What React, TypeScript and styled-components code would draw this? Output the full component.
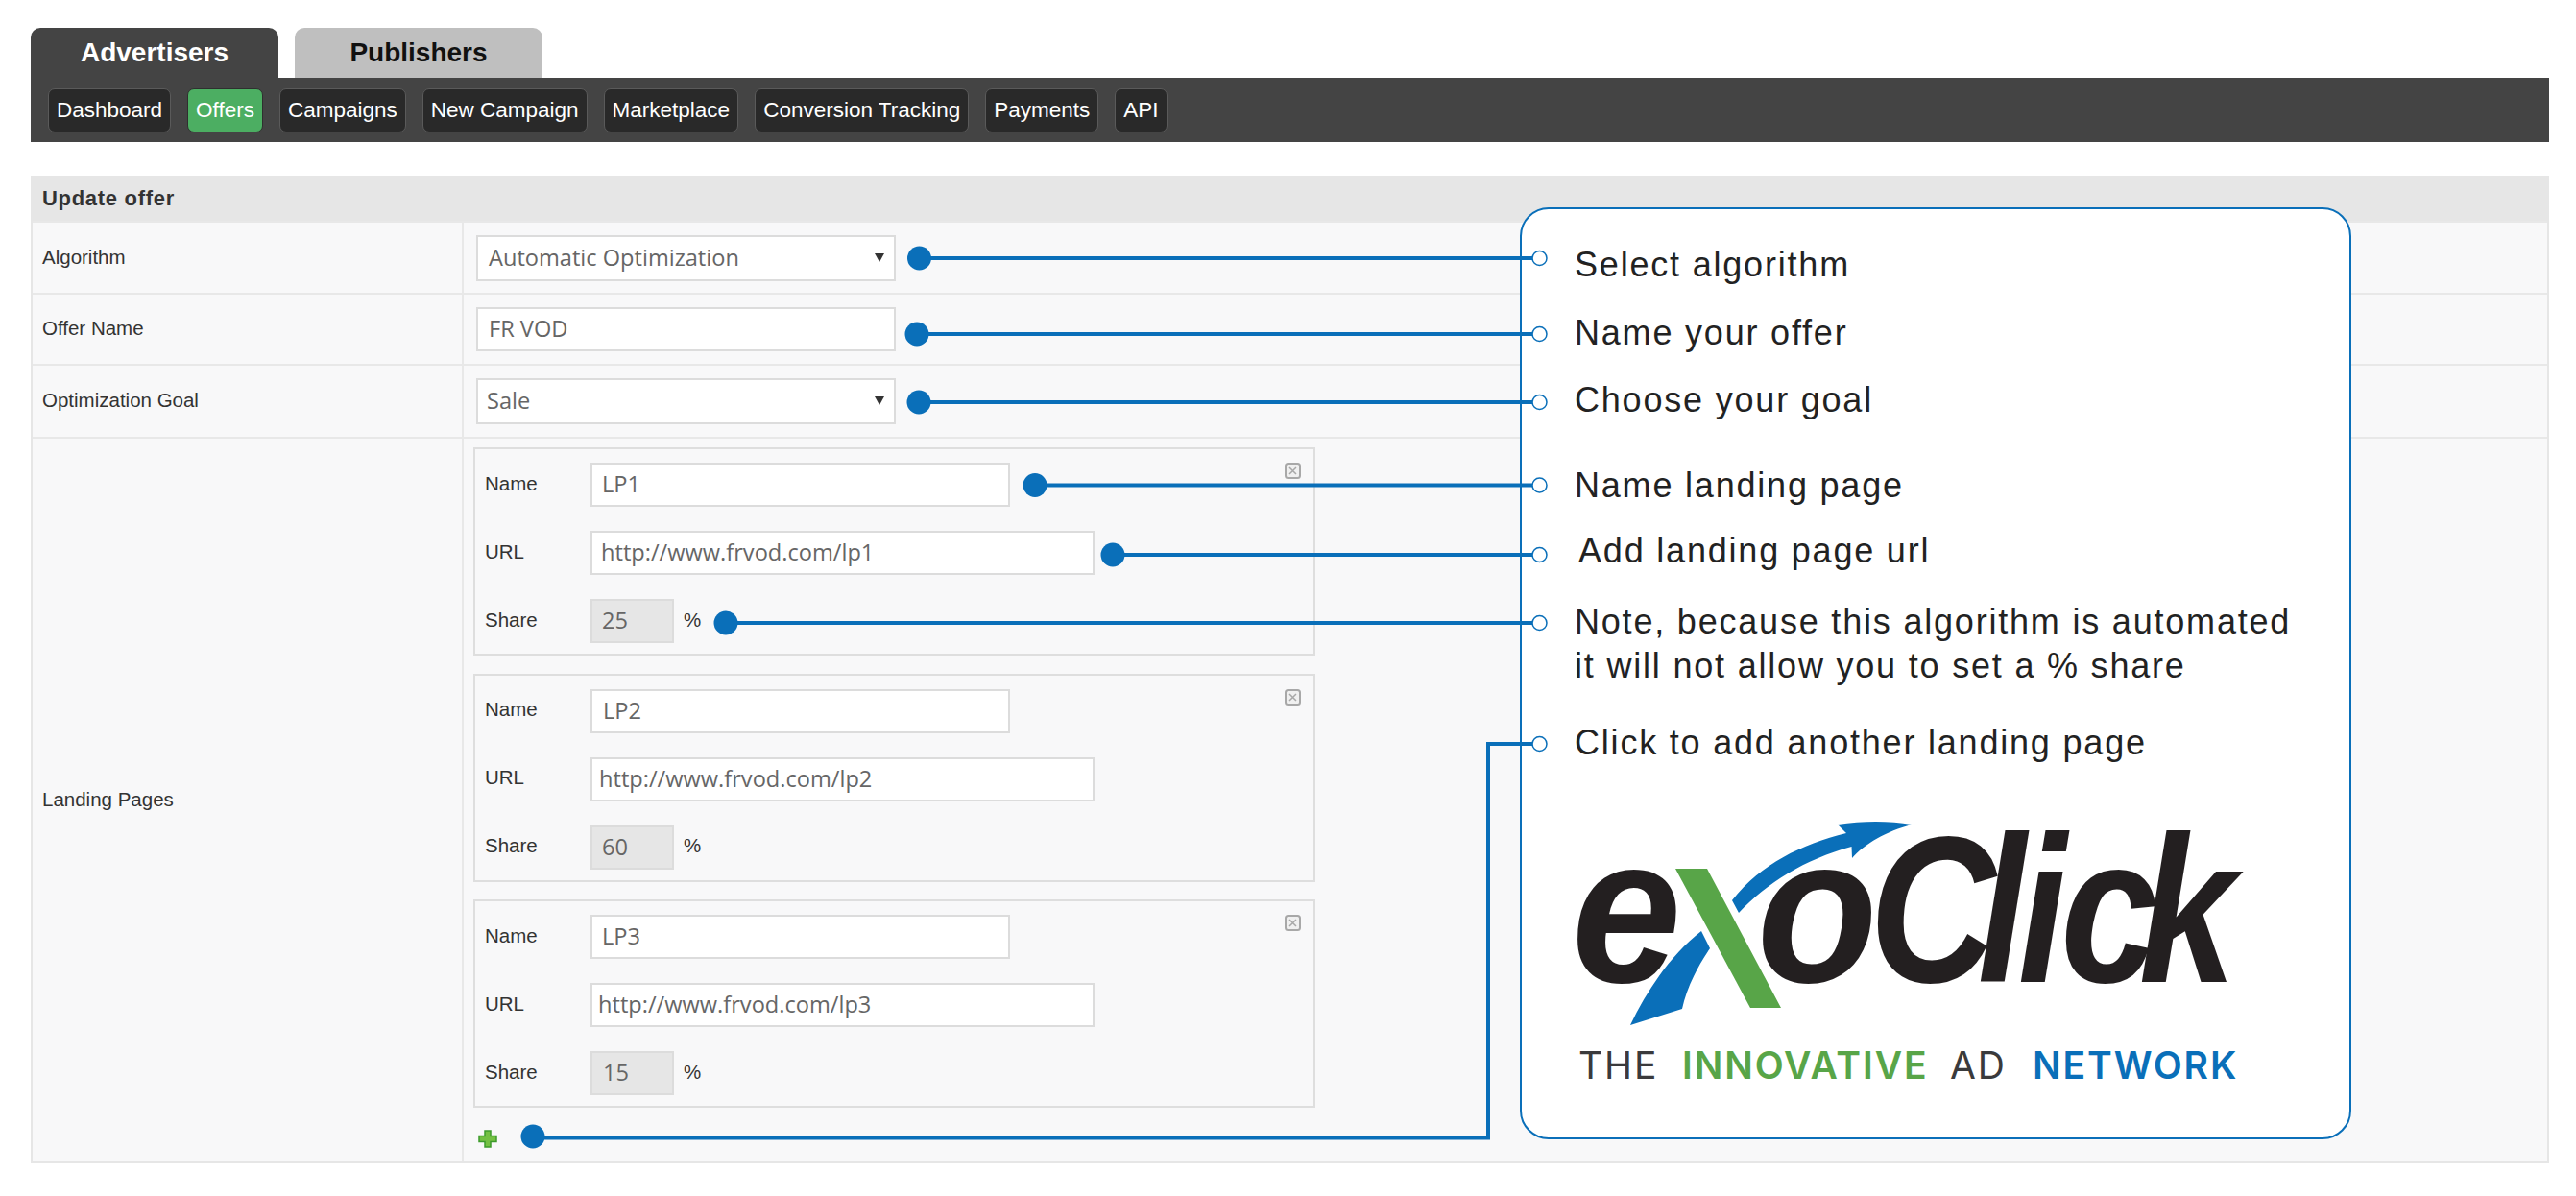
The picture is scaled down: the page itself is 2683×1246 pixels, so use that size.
import React from "react";
import styled, { createGlobalStyle } from "styled-components";

const Global = createGlobalStyle`
  html, body { margin: 0; padding: 0; background: #fff; }
  body { font-family: "Liberation Sans", Arial, sans-serif; overflow: hidden; }
`;

const BLUE = "#0a6fb9";

const Page = styled.div`
  position: relative;
  width: 2683px;
  height: 1246px;
  padding: 29px 28px 0 32px;
  box-sizing: border-box;
  overflow: hidden;
`;

const Tabs = styled.div`
  display: flex;
  gap: 17px;
  height: 52px;
`;

const Tab = styled.div<{ $active?: boolean }>`
  width: 258px;
  display: flex;
  align-items: center;
  justify-content: center;
  padding-bottom: 1px;
  border-radius: 10px 10px 0 0;
  font-size: 28px;
  font-weight: 700;
  background: ${(p) => (p.$active ? "#444444" : "#bfbfbf")};
  color: ${(p) => (p.$active ? "#ffffff" : "#111111")};
`;

const NavBar = styled.div`
  display: flex;
  align-items: flex-start;
  gap: 17px;
  height: 67px;
  padding: 11px 0 0 18px;
  box-sizing: border-box;
  background: #444444;
`;

const NavButton = styled.div<{ $active?: boolean }>`
  height: 46px;
  padding: 0 8px;
  display: flex;
  align-items: center;
  box-sizing: border-box;
  border-radius: 7px;
  font-size: 22.5px;
  color: #fff;
  background: ${(p) => (p.$active ? "#4cae62" : "#292929")};
  border: 1px solid ${(p) => (p.$active ? "#2f2f2f" : "#5a5a5a")};
`;

const Table = styled.div`
  margin-top: 35px;
  border: 2px solid #e6e6e6;
  border-top: 0;
  background: #f8f8f9;
  color: #333;
`;

const TableHead = styled.div`
  height: 47px;
  margin: 0 -2px;
  padding: 1px 0 0 12px;
  display: flex;
  align-items: center;
  box-sizing: border-box;
  background: #e6e6e6;
  font-size: 22px;
  font-weight: 700;
  letter-spacing: 0.7px;
`;

const Row = styled.div<{ $h: number }>`
  display: grid;
  grid-template-columns: 449px 1fr;
  height: ${(p) => p.$h}px;
  border-top: 2px solid #e8e8e8;
  box-sizing: border-box;
`;

const RowLabel = styled.div`
  display: flex;
  align-items: center;
  padding: 0 0 2px 10px;
  font-size: 20.5px;
  border-right: 2px solid #e8e8e8;
`;

const RowValue = styled.div`
  padding: 0 0 0 13px;
  display: flex;
  align-items: center;
`;

const LandingValue = styled.div`
  padding: 9px 0 0 10px;
  display: flex;
  flex-direction: column;
  gap: 18.5px;
`;

const Field = styled.div<{ $w: number; $pad?: number; $disabled?: boolean }>`
  position: relative;
  width: ${(p) => p.$w}px;
  height: 46px;
  padding: 0 0 2px ${(p) => p.$pad ?? 10}px;
  display: flex;
  align-items: center;
  box-sizing: border-box;
  background: ${(p) => (p.$disabled ? "#e6e6e6" : "#ffffff")};
  border: 2px solid #dcdcdc;
  font-family: "Open Sans", sans-serif;
  font-size: 23.6px;
  color: #666;
  white-space: nowrap;
`;

const SelectField = styled(Field)`
  height: 48px;
  &::after {
    content: "";
    position: absolute;
    right: 10px;
    top: 17px;
    border-left: 5px solid transparent;
    border-right: 5px solid transparent;
    border-top: 9px solid #333;
  }
`;

const LpBox = styled.div`
  position: relative;
  width: 877px;
  height: 217px;
  box-sizing: border-box;
  padding: 14px 0 0 10px;
  border: 2px solid #dedede;
  display: grid;
  grid-template-rows: 46px 46px 46px;
  row-gap: 25px;
`;

const LpRow = styled.div`
  display: grid;
  grid-template-columns: 110px auto 1fr;
  align-items: center;
`;

const LpLabel = styled.span`
  padding-bottom: 3px;
  font-size: 20.5px;
  color: #333;
`;

const Percent = styled.span`
  margin-left: 10px;
  padding-bottom: 3px;
  font-size: 20.5px;
  color: #333;
`;

const CloseIcon = styled.svg`
  position: absolute;
  top: 14px;
  right: 13px;
`;

const AddRow = styled.div`
  height: 19px;
  margin-top: 4px;
  margin-left: 5px;
  & > svg { display: block; }
`;

const Callout = styled.div`
  position: absolute;
  left: 1583px;
  top: 216px;
  width: 866px;
  height: 971px;
  box-sizing: border-box;
  padding: 35px 0 0 55px;
  border: 2px solid ${BLUE};
  border-radius: 30px;
  background: #fff;
  color: #222;
`;

const Note = styled.div<{ $top: number; $indent?: number }>`
  margin-top: ${(p) => p.$top}px;
  margin-left: ${(p) => p.$indent ?? 0}px;
  font-size: 36px;
  line-height: 46px;
  letter-spacing: 1.8px;
  white-space: nowrap;
`;

const Tagline = styled.div`
  position: absolute;
  left: 59px;
  top: 872px;
  display: flex;
  font-family: "Inter", sans-serif;
  font-size: 39px;
  line-height: 40px;
  letter-spacing: 1.9px;
  white-space: nowrap;
`;

const TagWord = styled.span<{ $w: number; $color: string; $bold?: boolean }>`
  width: ${(p) => p.$w}px;
  color: ${(p) => p.$color};
  font-weight: ${(p) => (p.$bold ? 600 : 400)};
`;

const Overlay = styled.svg`
  position: absolute;
  left: 0;
  top: 0;
  pointer-events: none;
`;

const LogoSvg = styled.svg`
  position: absolute;
  left: 0;
  top: 0;
`;

const Close = () => (
  <CloseIcon width="17" height="17" viewBox="0 0 17 17">
    <rect x="1" y="1" width="15" height="15" rx="2.5" fill="#f0f0f0" stroke="#a8a8a8" strokeWidth="2" />
    <path d="M5 5l7 7M12 5l-7 7" stroke="#a8a8a8" strokeWidth="1.5" />
  </CloseIcon>
);

const Plus = () => (
  <svg width="20" height="19" viewBox="0 0 20 19">
    <path d="M7 1h6v5.5h6v6h-6V18H7v-5.500H1v-6h6z" fill="#74c043" stroke="#3c9a2c" strokeWidth="1.5" />
  </svg>
);

const lps = [
  { name: "LP1", url: "http://www.frvod.com/lp1", share: "25", pad: [10, 9, 10] },
  { name: "LP2", url: "http://www.frvod.com/lp2", share: "60", pad: [11, 7, 10] },
  { name: "LP3", url: "http://www.frvod.com/lp3", share: "15", pad: [10, 6, 11] },
];

const nav = ["Dashboard", "Offers", "Campaigns", "New Campaign", "Marketplace", "Conversion Tracking", "Payments", "API"];

const lines = [
  { dx: 957.5, dy: 269, ty: 269 },
  { dx: 955, dy: 348, ty: 348 },
  { dx: 957, dy: 419, ty: 419 },
  { dx: 1078, dy: 505.5, ty: 505.5 },
  { dx: 1159, dy: 578, ty: 578 },
  { dx: 756, dy: 649, ty: 649 },
];

const INK = "#231f20";

export default function App() {
  return (
    <Page>
      <Global />
      <Tabs>
        <Tab $active>Advertisers</Tab>
        <Tab>Publishers</Tab>
      </Tabs>
      <NavBar>
        {nav.map((n) => (
          <NavButton key={n} $active={n === "Offers"}>{n}</NavButton>
        ))}
      </NavBar>
      <Table>
        <TableHead>Update offer</TableHead>
        <Row $h={75}>
          <RowLabel>Algorithm</RowLabel>
          <RowValue><SelectField $w={437} $pad={11}>Automatic Optimization</SelectField></RowValue>
        </Row>
        <Row $h={74}>
          <RowLabel>Offer Name</RowLabel>
          <RowValue><Field $w={437} $pad={11}>FR VOD</Field></RowValue>
        </Row>
        <Row $h={76}>
          <RowLabel>Optimization Goal</RowLabel>
          <RowValue><SelectField $w={437} $pad={9}>Sale</SelectField></RowValue>
        </Row>
        <Row $h={755}>
          <RowLabel>Landing Pages</RowLabel>
          <LandingValue>
            {lps.map((lp) => (
              <LpBox key={lp.name}>
                <Close />
                <LpRow><LpLabel>Name</LpLabel><Field $w={437} $pad={lp.pad[0]}>{lp.name}</Field></LpRow>
                <LpRow><LpLabel>URL</LpLabel><Field $w={525} $pad={lp.pad[1]}>{lp.url}</Field></LpRow>
                <LpRow>
                  <LpLabel>Share</LpLabel>
                  <Field $w={87} $pad={lp.pad[2]} $disabled>{lp.share}</Field>
                  <Percent>%</Percent>
                </LpRow>
              </LpBox>
            ))}
            <AddRow><Plus /></AddRow>
          </LandingValue>
        </Row>
      </Table>

      <Callout>
        <Note $top={0}>Select algorithm</Note>
        <Note $top={25}>Name your offer</Note>
        <Note $top={24}>Choose your goal</Note>
        <Note $top={43}>Name landing page</Note>
        <Note $top={22} $indent={4}>Add landing page url</Note>
        <Note $top={28}>Note, because this algorithm is automated<br />it will not allow you to set a % share</Note>
        <Note $top={34}>Click to add another landing page</Note>
        <LogoSvg width="862" height="967" viewBox="1585 218 862 967">
          <g fontFamily="Liberation Sans" fontWeight="700" fontStyle="italic" fontSize="217" fill={INK}>
            <text transform="scale(0.95 1)" x="1723 1926" y="1023">eo</text>
            <text transform="scale(0.84 1)" x="2318 2452 2502 2555 2652" y="1023">Click</text>
          </g>
          <path d="M1772 970L1781 988C1766 1010 1756 1032 1752 1051L1698 1068C1716 1030 1742 993 1772 970Z" fill={BLUE} />
          <path d="M1804 938C1835 899 1876 880 1923 868L1914 859C1940 855 1968 855 1991 859C1965 866 1942 879 1929 894L1928.5 882C1880 895 1840 920 1811 951Z" fill={BLUE} />
          <path d="M1745 905H1778L1855 1050H1823Z" fill="#58a548" />
        </LogoSvg>
        <Tagline>
          <TagWord $w={108} $color="#3a3a3c">THE</TagWord>
          <TagWord $w={279} $color="#58a548" $bold>INNOVATIVE</TagWord>
          <TagWord $w={86} $color="#3a3a3c">AD</TagWord>
          <TagWord $w={220} $color={BLUE} $bold>NETWORK</TagWord>
        </Tagline>
      </Callout>

      <Overlay width="2683" height="1246" viewBox="0 0 2683 1246">
        {lines.map((l) => (
          <g key={l.dy}>
            <line x1={l.dx} y1={l.dy} x2={1597} y2={l.ty} stroke={BLUE} strokeWidth="4" />
            <circle cx={l.dx} cy={l.dy} r="12.5" fill={BLUE} />
            <circle cx="1603.5" cy={l.ty} r="7.5" fill="#fff" stroke={BLUE} strokeWidth="1.5" />
          </g>
        ))}
        <path d="M555 1185.5H1550V775H1597" fill="none" stroke={BLUE} strokeWidth="4" />
        <circle cx="555" cy="1184" r="12.5" fill={BLUE} />
        <circle cx="1603.5" cy="775" r="7.5" fill="#fff" stroke={BLUE} strokeWidth="1.5" />
      </Overlay>
    </Page>
  );
}
